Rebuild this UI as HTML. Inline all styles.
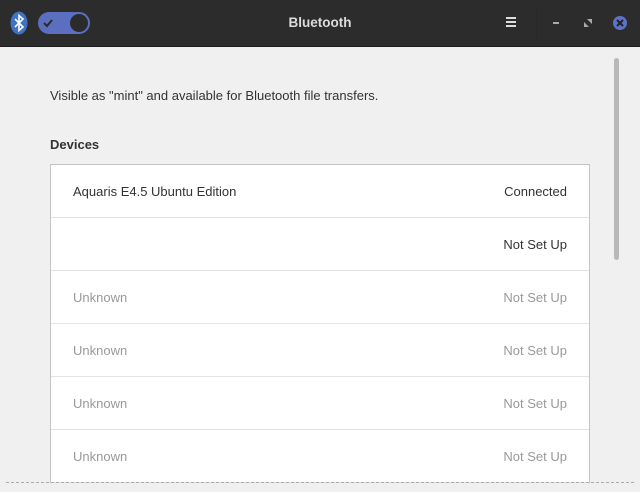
<!DOCTYPE html>
<html><head><style>
body{margin:0;width:640px;height:492px;overflow:hidden;background:#f0f0f0;font-family:"Liberation Sans",sans-serif;font-size:13px;color:#333;position:relative}
.hd{position:absolute;left:0;top:0;width:640px;height:46px;background:#2c2c2c;border-bottom:1px solid #1c1c1c}
.title{position:absolute;left:0;width:640px;top:15px;text-align:center;color:#dcdcdc;font-weight:bold;font-size:13.5px}
.list{position:absolute;left:50px;top:164px;width:538px;height:318px;overflow:hidden;background:#fff;border:1px solid #c4c4c4;border-bottom:none}
.row{height:52px;border-bottom:1px solid #e2e2e2;position:relative}
.row span{position:absolute;top:19px}
.l{left:22px}.r{right:22px}
.g{color:#999}
</style></head><body>
<div class="hd">
<svg style="position:absolute;left:10px;top:11px" width="18" height="24"><ellipse cx="9" cy="12" rx="8.5" ry="11.5" fill="#3f71c4"/><path d="M5 8l8 8-4 3.5V4.5l4 3.5-8 8" stroke="#fff" stroke-width="1.6" fill="none"/></svg>
<div style="position:absolute;left:38px;top:12px;width:50px;height:22px;border-radius:11px;background:#5a6fbf"></div>
<svg style="position:absolute;left:42px;top:17px" width="12" height="12"><path d="M2 6l3 3 5-6" stroke="#2a2a2a" stroke-width="2" fill="none"/></svg>
<div style="position:absolute;left:68px;top:12px;width:18px;height:18px;border-radius:50%;background:#2b2b2b;border:2px solid #5a6fbf"></div>
<div class="title">Bluetooth</div>
<div style="position:absolute;left:536px;top:6px;width:1px;height:34px;background:#292929"></div>
<div style="position:absolute;left:506px;top:17px;width:10px;height:2px;background:#ddd;box-shadow:0 4px 0 #ddd,0 8px 0 #ddd"></div>
<div style="position:absolute;left:553px;top:22px;width:6px;height:2px;background:#aaa"></div>
<svg style="position:absolute;left:584px;top:19px" width="8" height="8"><path d="M0 8V3l5 5zM8 0v5L3 0z" fill="#aaa"/></svg>
<div style="position:absolute;left:613px;top:16px;width:14px;height:14px;border-radius:50%;background:#5c72c8"></div>
<svg style="position:absolute;left:616px;top:19px" width="8" height="8"><path d="M1 1l6 6M7 1l-6 6" stroke="#222" stroke-width="2"/></svg>
</div>
<div style="position:absolute;left:50px;top:88px">Visible as "mint" and available for Bluetooth file transfers.</div>
<div style="position:absolute;left:50px;top:137px;font-weight:bold">Devices</div>
<div class="list">
<div class="row"><span class="l">Aquaris E4.5 Ubuntu Edition</span><span class="r">Connected</span></div>
<div class="row"><span class="r">Not Set Up</span></div>
<div class="row g"><span class="l">Unknown</span><span class="r">Not Set Up</span></div>
<div class="row g"><span class="l">Unknown</span><span class="r">Not Set Up</span></div>
<div class="row g"><span class="l">Unknown</span><span class="r">Not Set Up</span></div>
<div class="row g"><span class="l">Unknown</span><span class="r">Not Set Up</span></div>
</div>
<div style="position:absolute;left:614px;top:58px;width:5px;height:202px;border-radius:3px;background:#b8b8b8"></div>
<div style="position:absolute;left:6px;top:482px;width:628px;border-top:1px dashed #aaa"></div>
</body></html>
